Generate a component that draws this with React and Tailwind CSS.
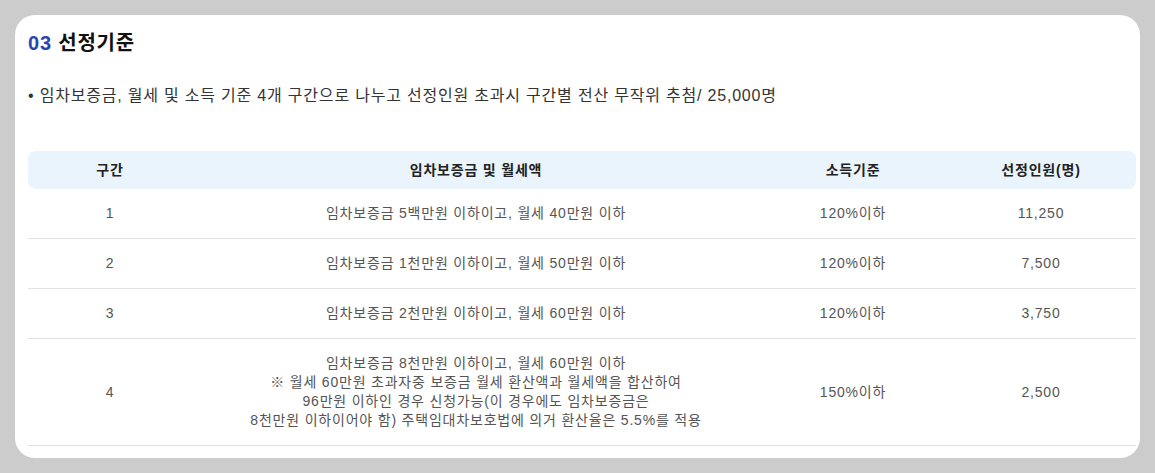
import React from "react";

const rows = [
  { no: "1", amount: ["임차보증금 5백만원 이하이고, 월세 40만원 이하"], income: "120%이하", count: "11,250" },
  { no: "2", amount: ["임차보증금 1천만원 이하이고, 월세 50만원 이하"], income: "120%이하", count: "7,500" },
  { no: "3", amount: ["임차보증금 2천만원 이하이고, 월세 60만원 이하"], income: "120%이하", count: "3,750" },
  {
    no: "4",
    amount: [
      "임차보증금 8천만원 이하이고, 월세 60만원 이하",
      "※ 월세 60만원 초과자중 보증금 월세 환산액과 월세액을 합산하여",
      "96만원 이하인 경우 신청가능(이 경우에도 임차보증금은",
      "8천만원 이하이어야 함) 주택임대차보호법에 의거 환산율은 5.5%를 적용",
    ],
    income: "150%이하",
    count: "2,500",
  },
];

const cols = "grid grid-cols-[164px_568px_186px_1fr] items-center text-center";

const App = () => {
  return (
    <div
      className="min-h-[473px] w-full bg-[#cccccc] pt-[15px] pl-[15px] tracking-[0.05em]"
      style={{ fontFamily: '"Liberation Sans", "Noto Sans CJK KR", sans-serif' }}
    >
      <div className="w-[1125px] h-[443px] bg-white rounded-[20px] pl-[13px] pr-[4px] pt-[14px]">
        {/* Title */}
        <h2 className="text-[20px] leading-[28px] font-bold text-[#111]">
          <span className="text-[#2b44b3]">03</span> 선정기준
        </h2>

        <p className="mt-[27px] text-[16px] leading-[24px] text-[#333]">
          • 임차보증금, 월세 및 소득 기준 4개 구간으로 나누고 선정인원 초과시 구간별 전산 무작위 추첨/ 25,000명
        </p>

        {/* Table */}
        <div className="mt-[43px] w-[1108px] text-[14px]">
          <div className={`${cols} h-[38px] bg-[#eaf4fd] rounded-lg font-semibold text-[#222]`}>
            <div>구간</div>
            <div>임차보증금 및 월세액</div>
            <div>소득기준</div>
            <div>선정인원(명)</div>
          </div>

          {rows.map((row, index) => (
            <div
              key={index}
              className={`${cols} border-b border-[#e2e2e2] text-[#555] ${
                row.amount.length > 1 ? "h-[107px]" : "h-[50px]"
              }`}
            >
              <div>{row.no}</div>
              <div className="leading-[19px]">
                {row.amount.map((line, i) => (
                  <p key={i}>{line}</p>
                ))}
              </div>
              <div>{row.income}</div>
              <div>{row.count}</div>
            </div>
          ))}
        </div>
      </div>
    </div>
  );
};

export default App;
